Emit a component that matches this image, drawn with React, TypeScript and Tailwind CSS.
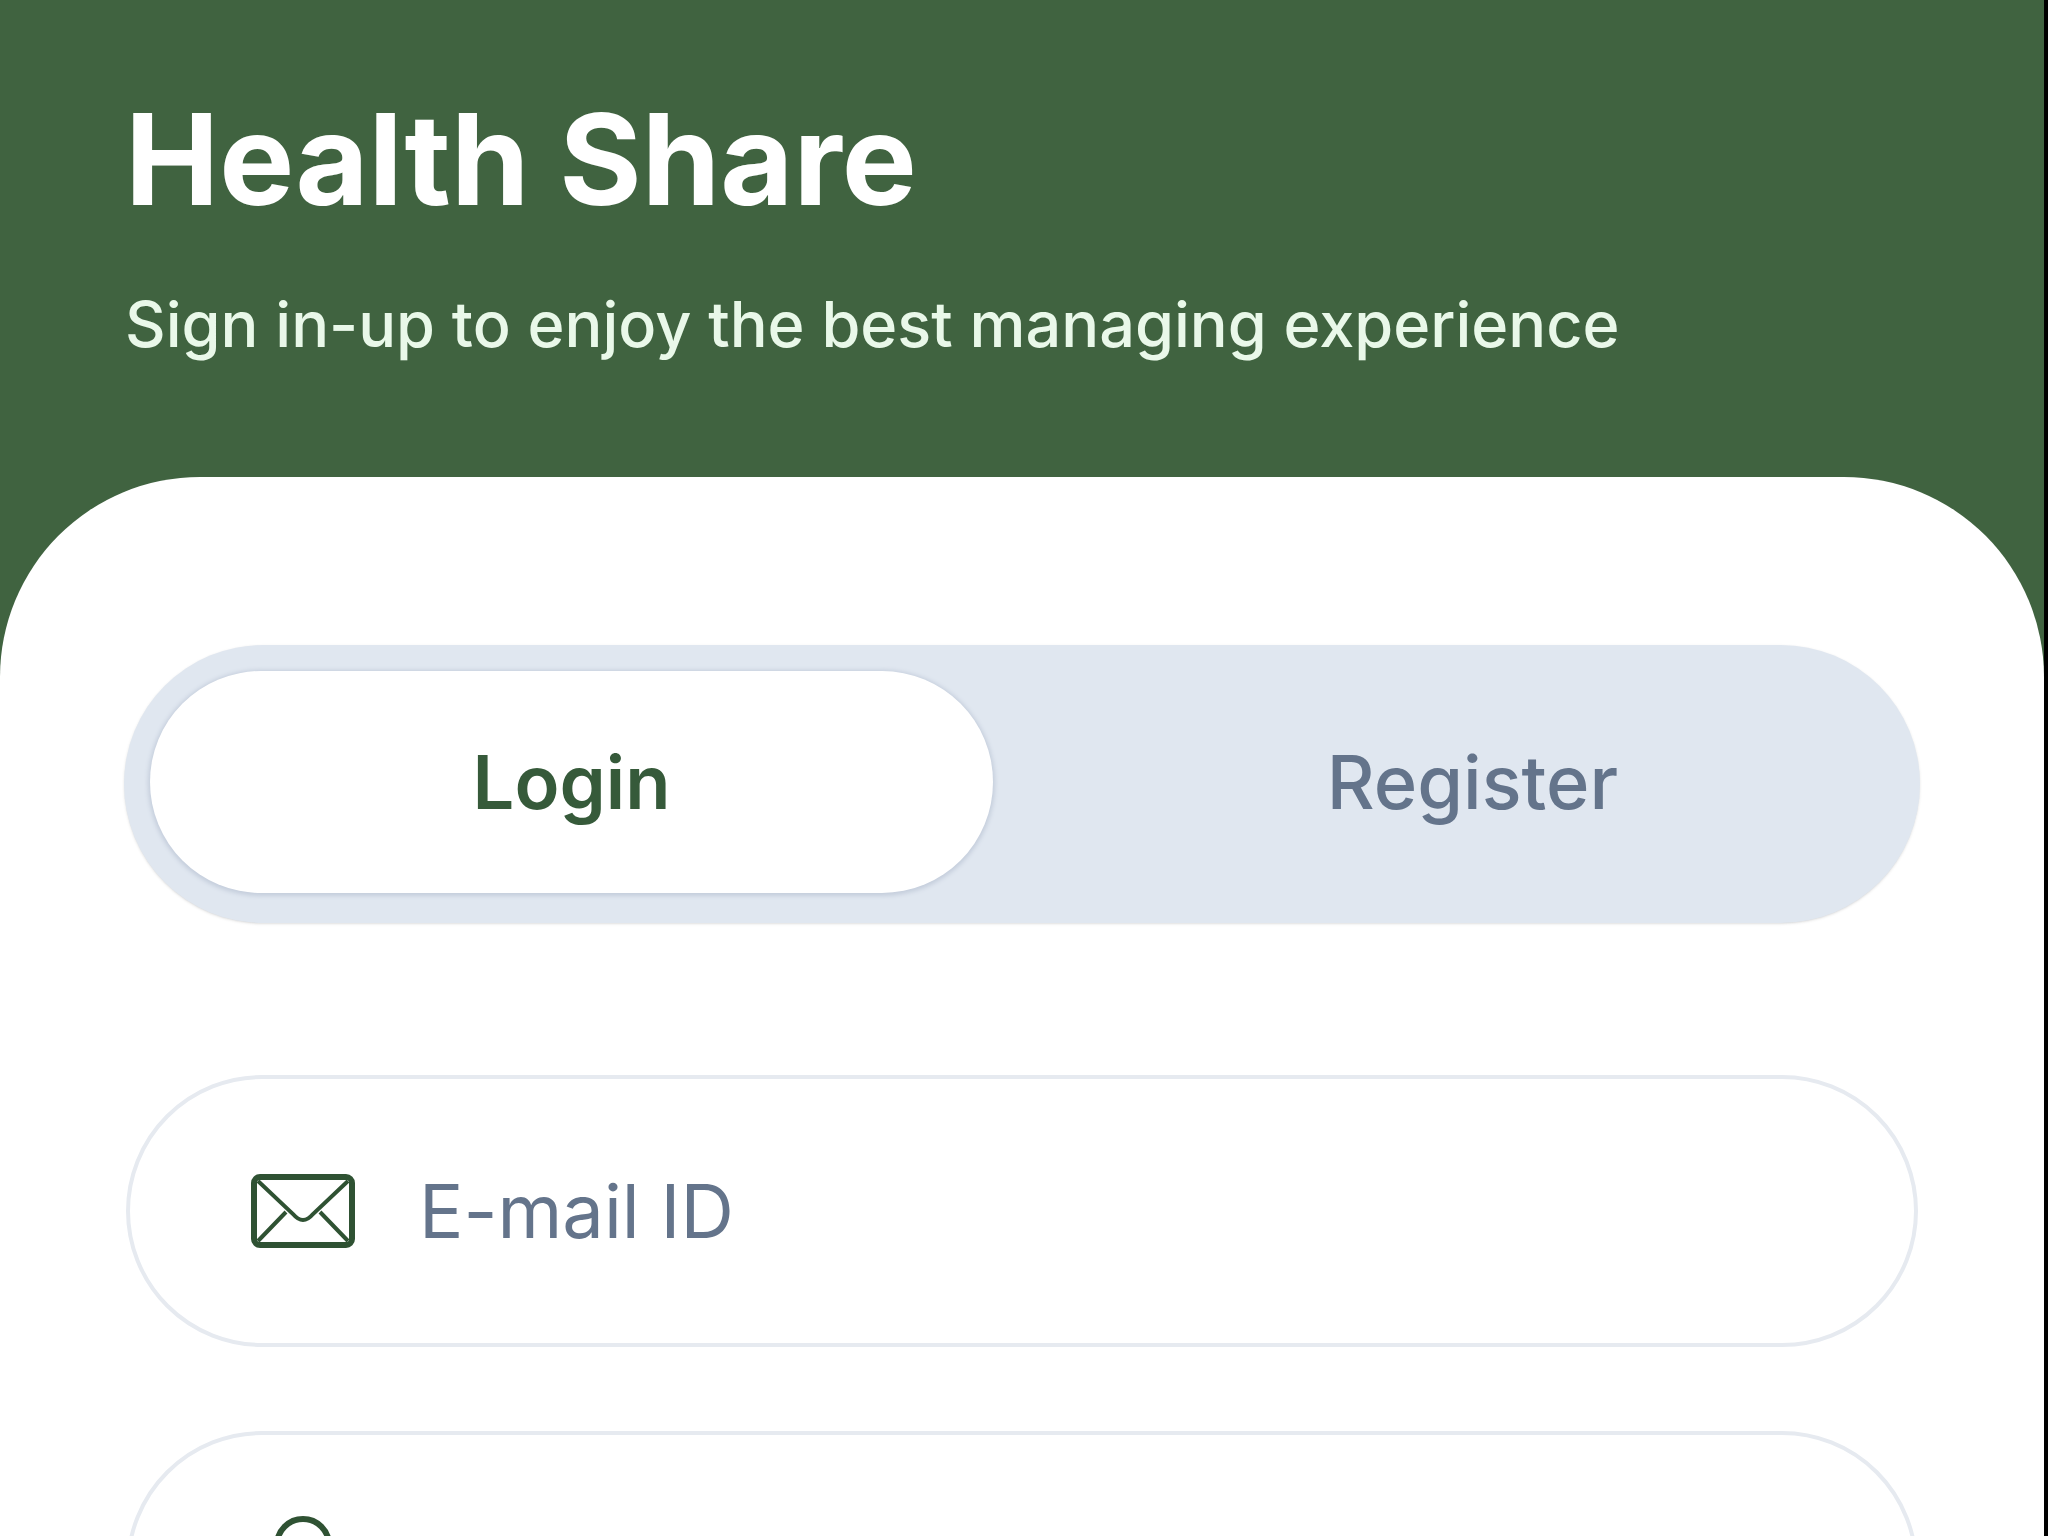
import { useState } from "react";
import type { ReactNode } from "react";

interface IField {
  id: string;
  type: string;
  label: string;
  placeholder?: string;
  icon: ReactNode;
}

const MailIcon = () => (
  <svg
    className="h-[74px] w-[104px]"
    viewBox="0 0 104 74"
    fill="none"
    stroke="#2f5233"
    strokeWidth="6"
  >
    <rect x="3" y="3" width="98" height="68" rx="6" />
    <path d="M7 7 42 40Q52 52 62 40L97 7" strokeWidth="4" />
    <path d="M7 67 35 38M97 67 69 38" strokeWidth="4" />
  </svg>
);

const LockIcon = () => (
  <svg
    className="h-[104px] w-[104px]"
    viewBox="0 0 104 104"
    fill="none"
    stroke="#2f5233"
    strokeWidth="6"
  >
    <path d="M26 46V30a26 26 0 0 1 52 0v16" />
    <rect x="12" y="46" width="80" height="55" rx="6" />
  </svg>
);

const Field = ({ id, type, label, placeholder, icon }: IField) => {
  return (
    <label
      htmlFor={id}
      className="flex h-[272px] items-center gap-[64px] rounded-full border-4 border-[#e6eaf0] px-[121px]"
    >
      {icon}
      <input
        id={id}
        type={type}
        aria-label={label}
        placeholder={placeholder}
        className="min-w-0 flex-1 bg-transparent text-[74px] text-slate-800 outline-none placeholder:text-[#64748b] placeholder:opacity-100"
      />
    </label>
  );
};

const App = () => {
  const [tab, setTab] = useState("Login");

  return (
    <div className="h-screen overflow-hidden bg-black pr-1 font-['Inter',sans-serif]">
      <div className="flex min-h-full flex-col bg-[#406340]">
        <header className="px-[125px] pt-[80px] pb-[109px] text-white">
          <h1 className="text-[126px] leading-[158px] font-bold">
            Health Share
          </h1>
          <p className="mt-[42px] text-[63px] leading-[88px] font-medium text-[#e9f8e9]">
            Sign in-up to enjoy the best managing experience
          </p>
        </header>

        <main className="flex-1 rounded-t-[200px] bg-white px-[124px] pt-[168px]">
          <div
            role="tablist"
            className="flex gap-[58px] rounded-full bg-[#e0e7f0] p-[26px] pb-[30px] shadow-sm"
          >
            {["Login", "Register"].map((name) => (
              <button
                key={name}
                type="button"
                role="tab"
                aria-selected={tab === name}
                onClick={() => setTab(name)}
                className={`h-[222px] flex-1 rounded-full text-[74px] ${
                  tab === name
                    ? "bg-white font-semibold text-[#365a3a] shadow-[0_1px_4px_2px_#c5cedc]"
                    : "font-medium text-[#64748b]"
                }`}
              >
                {name}
              </button>
            ))}
          </div>

          <form className="mt-[152px] flex flex-col gap-[84px] px-[2px]">
            <Field
              id="email"
              type="email"
              label="E-mail ID"
              placeholder="E-mail ID"
              icon={<MailIcon />}
            />
            <Field
              id="password"
              type="password"
              label="Password"
              icon={<LockIcon />}
            />
          </form>
        </main>
      </div>
    </div>
  );
};

export default App;
